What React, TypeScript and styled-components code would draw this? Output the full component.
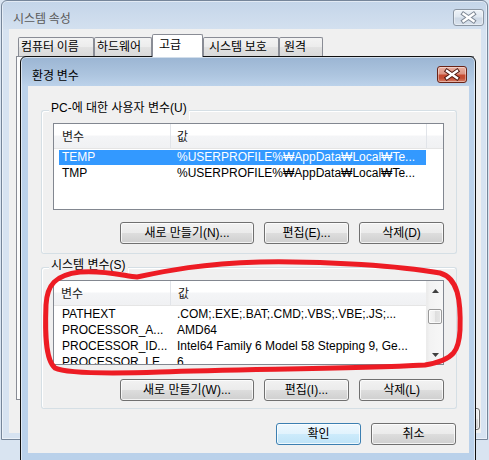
import React from "react";
import styled, { createGlobalStyle } from "styled-components";

const UI_FONT = `"Liberation Sans", "Noto Sans CJK KR", sans-serif`;
const KR_FONT = `"Noto Sans CJK KR", "Liberation Sans", sans-serif`;

const GlobalStyle = createGlobalStyle`
  * { box-sizing: border-box; }
  html, body { margin: 0; padding: 0; }
  body { background: #d9e4f1; font-family: ${UI_FONT}; font-size: 12px; color: #000; }
`;

const Desktop = styled.div`
  position: relative;
  width: 489px;
  height: 460px;
  overflow: hidden;
  background: #d9e4f1;
`;

/* ---------- background window (시스템 속성) ---------- */
const BackWindow = styled.div`
  position: absolute;
  left: 1px;
  top: 0;
  width: 487px;
  height: 440px;
  display: flex;
  flex-direction: column;
  padding: 0 6px 6px 7px;
  border: 1px solid #76869a;
  border-radius: 6px 6px 0 0;
  background: linear-gradient(180deg, #c4d5e9 0px, #d3e0ef 28px, #d7e3f1 29px, #d7e3f1 100%);
  box-shadow: inset 0 0 0 1px rgba(255, 255, 255, 0.5);
`;

const TitleBar = styled.div<{ $h: number; $pt: number; $mr: number }>`
  display: flex;
  align-items: flex-start;
  justify-content: space-between;
  flex: none;
  height: ${(p) => p.$h}px;
  padding: ${(p) => p.$pt}px 0 0 4px;
  margin-right: ${(p) => p.$mr}px;
`;

const TitleText = styled.span<{ $inactive?: boolean }>`
  font-family: ${KR_FONT};
  font-size: 12px;
  line-height: 17px;
  color: ${(p) => (p.$inactive ? "#5a5a5a" : "#000")};
  white-space: nowrap;
`;

const CloseBtn = styled.div<{ $active?: boolean; $w: number; $mt: number }>`
  width: ${(p) => p.$w}px;
  height: 17px;
  margin-top: ${(p) => p.$mt}px;
  flex: none;
  display: flex;
  align-items: center;
  justify-content: center;
  border-radius: 3px;
  border: 1px solid ${(p) => (p.$active ? "#6a2417" : "#8b96a3")};
  background: ${(p) =>
    p.$active
      ? "linear-gradient(180deg, #e9b1a2 0%, #dc9483 45%, #c64a30 55%, #c24d33 75%, #d9826a 100%)"
      : "linear-gradient(180deg, #eef3f8 0%, #dfe7f0 48%, #cdd8e5 52%, #d8e2ed 100%)"};
  box-shadow: inset 0 0 0 1px rgba(255, 255, 255, 0.4);
`;

const BackClient = styled.div`
  flex: 1;
  display: flex;
  flex-direction: column;
  background: #f0f0f0;
  padding: 5px 7px 0 7px;
`;

const TabStrip = styled.div`
  display: flex;
  align-items: flex-end;
  height: 22px;
  flex: none;
  padding-left: 2px;
  position: relative;
  z-index: 1;
`;

const Tab = styled.div<{ $w: number; $pl: number; $active?: boolean }>`
  width: ${(p) => p.$w}px;
  flex: none;
  height: ${(p) => (p.$active ? 23 : 19)}px;
  margin-bottom: ${(p) => (p.$active ? -1 : 0)}px;
  padding-left: ${(p) => p.$pl}px;
  border: 1px solid #898c95;
  border-bottom: none;
  border-radius: 2px 2px 0 0;
  background: ${(p) =>
    p.$active
      ? "#ffffff"
      : "linear-gradient(180deg, #f3f3f3 0%, #ececec 50%, #e2e2e2 51%, #d9d9d9 100%)"};
  font-family: ${KR_FONT};
  font-size: 12px;
  line-height: ${(p) => (p.$active ? 17 : 16)}px;
  white-space: nowrap;
`;

const TabPanel = styled.div`
  height: 344px;
  flex: none;
  border: 1px solid #898c95;
  background: #fcfcfc;
`;

const BackFooter = styled.div`
  display: flex;
  justify-content: flex-end;
  gap: 6px;
  margin: 8px -6px 0 0;
`;

/* ---------- dialog (환경 변수) ---------- */
const Dialog = styled.div`
  position: absolute;
  left: 20px;
  top: 56px;
  width: 456px;
  height: 410px;
  display: flex;
  flex-direction: column;
  padding: 0 6px 0 7px;
  border: 1px solid #101010;
  border-radius: 6px 6px 0 0;
  background: linear-gradient(180deg, #9bb5d3 0px, #adc5df 18px, #bcd2ea 29px, #bad1ea 100%);
  box-shadow: inset 0 0 0 1px rgba(255, 255, 255, 0.55);
`;

const DialogClient = styled.div`
  height: 367px;
  flex: none;
  display: flex;
  flex-direction: column;
  background: #f0f0f0;
  padding: 15px 12px 0 13px;
`;

const Group = styled.div<{ $mt?: number }>`
  display: flex;
  flex-direction: column;
  width: 416px;
  flex: none;
  margin-top: ${(p) => p.$mt ?? 0}px;
`;

const GroupHead = styled.div`
  display: flex;
  height: 19px;
  flex: none;
  &::before,
  &::after {
    content: "";
    height: 9px;
    align-self: flex-end;
    border-top: 1px solid #d5dfe5;
    box-shadow: inset 1px 1px 0 #ffffff;
  }
  &::before {
    width: 7px;
    flex: none;
    border-left: 1px solid #d5dfe5;
    border-top-left-radius: 3px;
  }
  &::after {
    flex: 1;
    border-right: 1px solid #d5dfe5;
    border-top-right-radius: 3px;
  }
`;

const GroupLabel = styled.span`
  font-family: ${UI_FONT};
  font-size: 12px;
  line-height: 14px;
  padding: 0 2px;
  white-space: nowrap;
  align-self: flex-start;
`;

const GroupBody = styled.div<{ $pb: number }>`
  display: flex;
  flex-direction: column;
  border: 1px solid #d5dfe5;
  border-top: none;
  border-radius: 0 0 3px 3px;
  box-shadow: inset 1px 0 0 #ffffff;
  padding: 3px 12px ${(p) => p.$pb}px 11px;
`;

const ListView = styled.div<{ $h: number }>`
  width: 391px;
  height: ${(p) => p.$h}px;
  flex: none;
  display: flex;
  border: 1px solid #828790;
  background: #ffffff;
  overflow: hidden;
`;

const ListMain = styled.div`
  flex: 1;
  min-width: 0;
  display: flex;
  flex-direction: column;
  overflow: hidden;
`;

const ListHeader = styled.div`
  display: flex;
  height: 25px;
  flex: none;
  border-bottom: 1px solid #e5e5e5;
  background: linear-gradient(180deg, #ffffff 0%, #ffffff 46%, #f4f5f7 50%, #f0f1f3 100%);
`;

const HeaderCell = styled.div<{ $w: number; $pl: number }>`
  width: ${(p) => p.$w}px;
  flex: none;
  padding: 1px 0 0 ${(p) => p.$pl}px;
  border-right: 1px solid #e1e4e9;
  font-family: ${KR_FONT};
  font-size: 12px;
  line-height: 22px;
  color: #1a1a1a;
`;

const Row = styled.div<{ $sel?: boolean }>`
  display: flex;
  width: 367px;
  height: 15px;
  flex: none;
  margin: 1px 0 0 5px;
  background: ${(p) => (p.$sel ? "#3399ff" : "transparent")};
  color: ${(p) => (p.$sel ? "#ffffff" : "#000000")};
  font-family: ${UI_FONT};
  font-size: 12px;
  line-height: 15px;
  white-space: nowrap;
`;

const NameCell = styled.div`
  width: 112px;
  flex: none;
  padding-left: 3px;
  overflow: hidden;
`;

const ValueCell = styled.div`
  flex: 1;
  padding-left: 6px;
  overflow: hidden;
`;

const ScrollBar = styled.div`
  width: 17px;
  flex: none;
  display: flex;
  flex-direction: column;
  border-left: 1px solid #ececec;
  background: linear-gradient(90deg, #ebebeb 0px, #f3f3f3 3px, #f7f7f7 100%);
`;

const ScrollArrow = styled.div<{ $mt: number }>`
  height: 17px;
  flex: none;
  display: flex;
  justify-content: center;
  align-items: flex-start;
  padding-top: ${(p) => p.$mt}px;
`;

const Thumb = styled.div`
  height: 15px;
  flex: none;
  margin: 11px 1px 0 1px;
  border: 1px solid #9a9a9a;
  border-radius: 2px;
  background: linear-gradient(90deg, #f7f7f7 0%, #ececec 50%, #dedede 51%, #e6e6e6 100%);
  box-shadow: inset 0 0 0 1px rgba(255, 255, 255, 0.8);
`;

const Spacer = styled.div`
  flex: 1;
`;

const ButtonRow = styled.div<{ $mt: number; $pr?: number }>`
  display: flex;
  justify-content: flex-end;
  gap: 10px;
  flex: none;
  margin-top: ${(p) => p.$mt}px;
  padding-right: ${(p) => p.$pr ?? 0}px;
`;

const Btn = styled.button<{ $w: number; $def?: boolean }>`
  width: ${(p) => p.$w}px;
  height: 22px;
  flex: none;
  margin: 0;
  padding: 0;
  border: 1px solid ${(p) => (p.$def ? "#3c7fb1" : "#707070")};
  border-radius: 3px;
  background: ${(p) =>
    p.$def
      ? "linear-gradient(180deg, #eef8fe 0%, #e1f3fd 50%, #cdebfb 51%, #bfe3f7 100%)"
      : "linear-gradient(180deg, #f2f2f2 0%, #ebebeb 50%, #dddddd 51%, #cfcfcf 100%)"};
  box-shadow: inset 0 0 0 1px rgba(255, 255, 255, 0.75);
  font-family: ${UI_FONT};
  font-size: 12px;
  line-height: 20px;
  color: #000;
  white-space: nowrap;
`;

const Annotation = styled.svg`
  position: absolute;
  left: 0;
  top: 0;
  width: 489px;
  height: 460px;
  pointer-events: none;
  z-index: 10;
`;

const CloseX: React.FC<{ outline: string; w: number }> = ({ outline, w }) => (
  <svg width={w} height={15} viewBox={`0 0 ${w} 15`}>
    <g strokeLinecap="square">
      <path d={`M${w / 2 - 5} 4 L${w / 2 + 5} 11 M${w / 2 + 5} 4 L${w / 2 - 5} 11`} stroke={outline} strokeWidth={4.4} fill="none" />
      <path d={`M${w / 2 - 5} 4 L${w / 2 + 5} 11 M${w / 2 + 5} 4 L${w / 2 - 5} 11`} stroke="#ffffff" strokeWidth={2.4} fill="none" />
    </g>
  </svg>
);

const UpArrow = () => (
  <svg width="7" height="4" viewBox="0 0 7 4">
    <path d="M0 4 L3.5 0 L7 4 Z" fill="#404040" />
  </svg>
);
const DownArrow = () => (
  <svg width="7" height="4" viewBox="0 0 7 4">
    <path d="M0 0 L7 0 L3.5 4 Z" fill="#404040" />
  </svg>
);

const userVars = [
  { name: "TEMP", value: "%USERPROFILE%₩AppData₩Local₩Te...", sel: true },
  { name: "TMP", value: "%USERPROFILE%₩AppData₩Local₩Te..." },
];

const sysVars = [
  { name: "PATHEXT", value: ".COM;.EXE;.BAT;.CMD;.VBS;.VBE;.JS;..." },
  { name: "PROCESSOR_A...", value: "AMD64" },
  { name: "PROCESSOR_ID...", value: "Intel64 Family 6 Model 58 Stepping 9, Ge..." },
  { name: "PROCESSOR_LE...", value: "6" },
];

const tabs = [
  { label: "컴퓨터 이름", w: 76, pl: 2 },
  { label: "하드웨어", w: 58, pl: 2 },
  { label: "고급", w: 51, pl: 6, active: true },
  { label: "시스템 보호", w: 76, pl: 5 },
  { label: "원격", w: 44, pl: 4 },
];

export default function App() {
  return (
    <>
      <GlobalStyle />
      <Desktop>
        <BackWindow>
          <TitleBar $h={28} $pt={8} $mr={-3}>
            <TitleText $inactive>시스템 속성</TitleText>
            <CloseBtn $w={31} $mt={0}>
              <CloseX outline="#7d8794" w={29} />
            </CloseBtn>
          </TitleBar>
          <BackClient>
            <TabStrip>
              {tabs.map((t) => (
                <Tab key={t.label} $w={t.w} $pl={t.pl} $active={t.active}>
                  {t.label}
                </Tab>
              ))}
            </TabStrip>
            <TabPanel />
            <BackFooter>
              <Btn $w={75}>확인</Btn>
              <Btn $w={75}>취소</Btn>
              <Btn $w={75}>적용(A)</Btn>
            </BackFooter>
          </BackClient>
        </BackWindow>

        <Dialog>
          <TitleBar $h={29} $pt={9} $mr={2}>
            <TitleText>환경 변수</TitleText>
            <CloseBtn $active $w={30} $mt={0}>
              <CloseX outline="#4a160e" w={28} />
            </CloseBtn>
          </TitleBar>
          <DialogClient>
            <Group>
              <GroupHead>
                <GroupLabel>PC-에 대한 사용자 변수(U)</GroupLabel>
              </GroupHead>
              <GroupBody $pb={9}>
                <ListView $h={87}>
                  <ListMain>
                    <ListHeader>
                      <HeaderCell $w={117} $pl={8}>변수</HeaderCell>
                      <HeaderCell $w={256} $pl={6}>값</HeaderCell>
                    </ListHeader>
                    {userVars.map((v) => (
                      <Row key={v.name} $sel={v.sel}>
                        <NameCell>{v.name}</NameCell>
                        <ValueCell>{v.value}</ValueCell>
                      </Row>
                    ))}
                  </ListMain>
                </ListView>
                <ButtonRow $mt={12}>
                  <Btn $w={134}>새로 만들기(N)...</Btn>
                  <Btn $w={85}>편집(E)...</Btn>
                  <Btn $w={85}>삭제(D)</Btn>
                </ButtonRow>
              </GroupBody>
            </Group>

            <Group $mt={4}>
              <GroupHead>
                <GroupLabel>시스템 변수(S)</GroupLabel>
              </GroupHead>
              <GroupBody $pb={7}>
                <ListView $h={85}>
                  <ListMain>
                    <ListHeader>
                      <HeaderCell $w={117} $pl={7}>변수</HeaderCell>
                      <HeaderCell $w={256} $pl={7}>값</HeaderCell>
                    </ListHeader>
                    {sysVars.map((v) => (
                      <Row key={v.name}>
                        <NameCell>{v.name}</NameCell>
                        <ValueCell>{v.value}</ValueCell>
                      </Row>
                    ))}
                  </ListMain>
                  <ScrollBar>
                    <ScrollArrow $mt={8}>
                      <UpArrow />
                    </ScrollArrow>
                    <Thumb />
                    <Spacer />
                    <ScrollArrow $mt={6}>
                      <DownArrow />
                    </ScrollArrow>
                  </ScrollBar>
                </ListView>
                <ButtonRow $mt={14}>
                  <Btn $w={134}>새로 만들기(W)...</Btn>
                  <Btn $w={85}>편집(I)...</Btn>
                  <Btn $w={85}>삭제(L)</Btn>
                </ButtonRow>
              </GroupBody>
            </Group>

            <ButtonRow $mt={14} $pr={1}>
              <Btn $w={85} $def>확인</Btn>
              <Btn $w={85}>취소</Btn>
            </ButtonRow>
          </DialogClient>
        </Dialog>

        <Annotation viewBox="0 0 489 460">
          <path
            d="M137 277 C170 270, 200 264, 260 262 C330 261, 400 266, 440 273 C458 278, 461 300, 460 330 C459 350, 455 360, 425 365 C350 369, 250 369, 160 372 C100 374, 65 373, 55 368 C45 360, 45 330, 46 305 C47 285, 55 275, 80 272 C105 270, 125 276, 137 277 Z"
            fill="none"
            stroke="#ed1c24"
            strokeWidth={5}
            strokeLinejoin="round"
            strokeLinecap="round"
          />
        </Annotation>
      </Desktop>
    </>
  );
}
